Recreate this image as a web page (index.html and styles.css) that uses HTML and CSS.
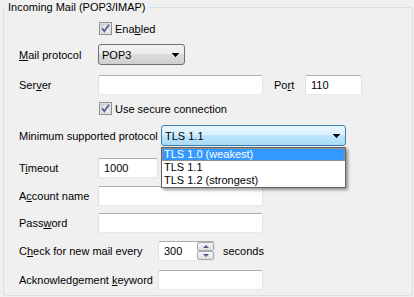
FILE: index.html
```html
<!DOCTYPE html>
<html>
<head>
<meta charset="utf-8">
<link rel="stylesheet" href="styles.css">
</head>
<body>
<fieldset class="group">
  <legend class="legend">Incoming Mail (POP3/IMAP)</legend>
  <div class="body">
    <div class="row r1">
      <span class="spacer"></span>
      <svg class="check" width="13" height="13" viewBox="0 0 13 13"><defs><linearGradient id="cg" x1="0" y1="0" x2="1" y2="1"><stop offset="0" stop-color="#d8d8d8"/><stop offset="1" stop-color="#f8f8f8"/></linearGradient></defs><rect x="0.5" y="0.5" width="12" height="12" fill="#f4f4f4" stroke="#8e8f8f"/><rect x="2" y="2" width="9" height="9" fill="url(#cg)" stroke="#b4b4b4" stroke-width="0.6"/><path d="M3.2 6.2 L5.3 9.2 L10 2.8" fill="none" stroke="#4c5e93" stroke-width="1.7"/></svg>
      <span class="ctext">Ena<u>b</u>led</span>
    </div>
    <div class="row r2">
      <span class="lbl"><u>M</u>ail protocol</span>
      <div class="combo c1"><span>POP3</span><svg class="arrow" width="7" height="4"><rect x="0" y="0" width="7" height="1"/><rect x="1" y="1" width="5" height="1"/><rect x="2" y="2" width="3" height="1"/><rect x="3" y="3" width="1" height="1"/></svg></div>
    </div>
    <div class="row r3">
      <span class="lbl">Ser<u>v</u>er</span>
      <div class="input wide"></div>
      <span class="port-lbl">Po<u>r</u>t</span>
      <div class="input port">110</div>
    </div>
    <div class="row r4">
      <span class="spacer"></span>
      <svg class="check" width="13" height="13" viewBox="0 0 13 13"><defs><linearGradient id="cg2" x1="0" y1="0" x2="1" y2="1"><stop offset="0" stop-color="#d8d8d8"/><stop offset="1" stop-color="#f8f8f8"/></linearGradient></defs><rect x="0.5" y="0.5" width="12" height="12" fill="#f4f4f4" stroke="#8e8f8f"/><rect x="2" y="2" width="9" height="9" fill="url(#cg2)" stroke="#b4b4b4" stroke-width="0.6"/><path d="M3.2 6.2 L5.3 9.2 L10 2.8" fill="none" stroke="#4c5e93" stroke-width="1.7"/></svg>
      <span class="ctext">Use secure connection</span>
    </div>
    <div class="row r5">
      <span class="lbl lbl-long">Minimum supported protocol</span>
      <div class="combo open c2"><span>TLS 1.1</span><svg class="arrow" width="7" height="4"><rect x="0" y="0" width="7" height="1"/><rect x="1" y="1" width="5" height="1"/><rect x="2" y="2" width="3" height="1"/><rect x="3" y="3" width="1" height="1"/></svg>
        <div class="list">
          <div class="item sel">TLS 1.0 (weakest)</div>
          <div class="item">TLS 1.1</div>
          <div class="item">TLS 1.2 (strongest)</div>
        </div>
      </div>
    </div>
    <div class="row r6">
      <span class="lbl">T<u>i</u>meout</span>
      <div class="input timeout">1000</div>
    </div>
    <div class="row r7">
      <span class="lbl">A<u>c</u>count name</span>
      <div class="input wide"></div>
    </div>
    <div class="row r8">
      <span class="lbl">Pass<u>w</u>ord</span>
      <div class="input wide"></div>
    </div>
    <div class="row r9">
      <span class="lbl lbl-mid">C<u>h</u>eck for new mail every</span>
      <div class="input spin"><span class="spin-val">300</span>
        <div class="spin-btns">
          <div class="sbtn"><span class="tri up"></span></div>
          <div class="sbtn"><span class="tri down"></span></div>
        </div>
      </div>
      <span class="unit">seconds</span>
    </div>
    <div class="row r10">
      <span class="lbl lbl-mid">Acknowledgement <u>k</u>eyword</span>
      <div class="input ack"></div>
    </div>
  </div>
</fieldset>
</body>
</html>
```
FILE: styles.css
```css
html, body {
  margin: 0;
  padding: 0;
}
body {
  background: #f0f0f0;
  font-family: "Liberation Sans", Arial, sans-serif;
  font-size: 11px;
  color: #000;
  width: 414px;
  height: 297px;
  overflow: hidden;
}
u {
  text-decoration: underline;
  text-underline-offset: 1px;
}
.group {
  margin: 1px 1px 0 3px;
  padding: 0;
  height: 295px;
  box-sizing: border-box;
  border: 1px solid #d5dfe5;
  border-radius: 3px;
  min-width: 0;
}
.legend {
  margin-left: 2px;
  padding: 0 2px;
  line-height: 13px;
}
.body {
  padding-left: 15px;
}
.row {
  display: flex;
  align-items: center;
}
.r1 { margin-top: 8px; height: 13px; }
.r2 { margin-top: 9px; height: 21px; }
.r3 { margin-top: 10px; height: 20px; }
.r4 { margin-top: 7px; height: 13px; }
.r5 { margin-top: 10px; height: 21px; }
.r6 { margin-top: 12px; height: 20px; }
.r7 { margin-top: 8px; height: 20px; }
.r8 { margin-top: 7px; height: 20px; }
.r9 { margin-top: 8px; height: 20px; }
.r10 { margin-top: 9px; height: 20px; }

.spacer { width: 80px; flex: none; }
.check { flex: none; display: block; }
.ctext { margin-left: 3px; }
.lbl { width: 79px; flex: none; white-space: nowrap; }
.lbl-long { width: 142px; }
.lbl-mid { width: 139px; }

.combo {
  position: relative;
  box-sizing: border-box;
  height: 21px;
  border: 1px solid #707070;
  border-radius: 3px;
  background: linear-gradient(#f2f2f2 0, #ebebeb 50%, #dddddd 50%, #cfcfcf 100%);
  display: flex;
  align-items: center;
  padding-left: 3px;
  flex: none;
}
.combo .arrow {
  margin-left: auto;
  margin-right: 5px;
  fill: #000;
  display: block;
}
.c1 { width: 87px; }
.c2 { width: 185px; }
.combo.open {
  border-color: #3c7fb1;
  background: linear-gradient(#eaf6fd 0, #d9f0fc 50%, #bee6fd 50%, #a7d9f5 100%);
}
.list {
  position: absolute;
  left: -1px;
  top: 21px;
  width: 185px;
  box-sizing: border-box;
  border: 1px solid #646464;
  background: #fff;
  box-shadow: 2px 2px 3px rgba(0, 0, 0, 0.4);
  z-index: 5;
}
.item {
  height: 13px;
  line-height: 13px;
  padding-left: 2px;
  white-space: nowrap;
}
.item.sel {
  background: #3399ff;
  color: #fff;
  outline: 1px dotted #e48a2e;
  outline-offset: -1px;
}

.input {
  box-sizing: border-box;
  height: 20px;
  background: #fff;
  border: 1px solid;
  border-color: #abadb3 #e2e3ea #e3e9ef #dbdfe6;
  border-radius: 2px;
  padding-left: 5px;
  display: flex;
  align-items: center;
  flex: none;
}
.wide { width: 165px; }
.port-lbl { margin-left: 11px; width: 31px; flex: none; }
.port { width: 57px; }
.timeout { width: 60px; }
.ack { width: 105px; }
.spin {
  width: 57px;
  padding-right: 0;
}
.spin-val { flex: 1; }
.spin-btns {
  width: 17px;
  height: 18px;
  display: flex;
  flex-direction: column;
  flex: none;
}
.sbtn {
  flex: 1;
  box-sizing: border-box;
  border: 1px solid #a9a9a9;
  border-radius: 2px;
  background: linear-gradient(#f6f6f6, #dedede);
  display: flex;
  align-items: center;
  justify-content: center;
}
.tri {
  width: 0;
  height: 0;
  border-left: 3px solid transparent;
  border-right: 3px solid transparent;
}
.tri.up { border-bottom: 3px solid #4b5f8c; }
.tri.down { border-top: 3px solid #4b5f8c; }
.unit { margin-left: 8px; }
```
